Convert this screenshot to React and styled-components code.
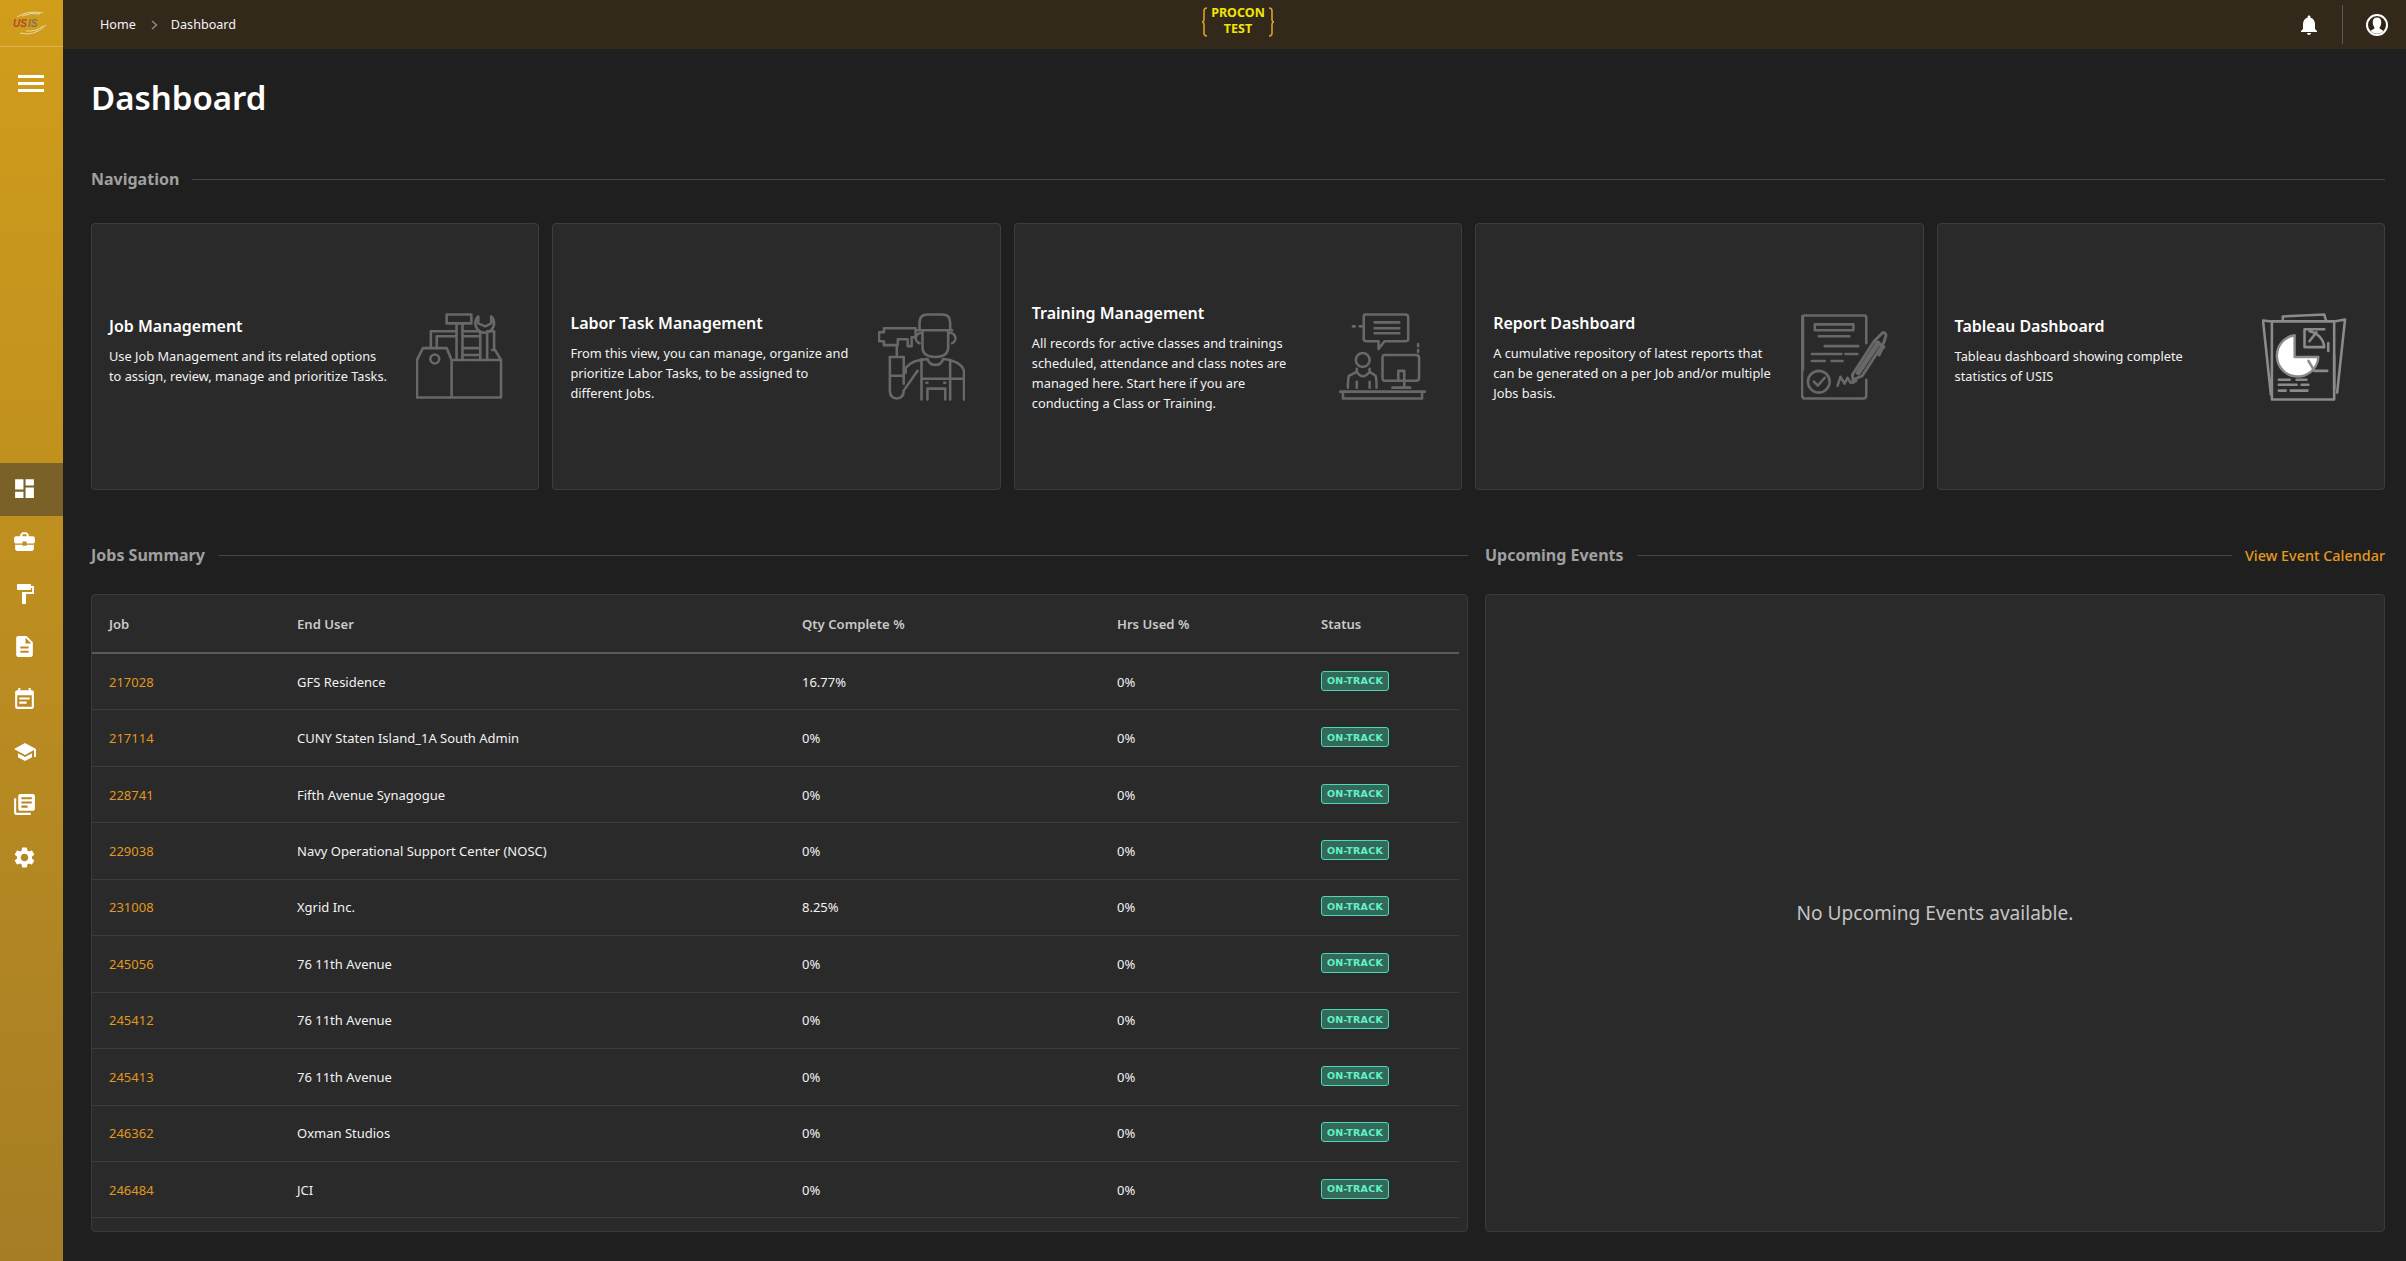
import React from "react";
import styled, { createGlobalStyle } from "styled-components";
import { MdDashboard, MdBusinessCenter, MdFormatPaint, MdDescription, MdEventNote, MdSchool, MdLibraryBooks, MdSettings, MdNotifications } from "react-icons/md";

const Global = createGlobalStyle`
  html, body { margin: 0; padding: 0; height: 100%; background: #1f1f1f; overflow: hidden; }
  body { font-family: "Noto Sans", "Open Sans", sans-serif; color: #fff; }
  * { box-sizing: border-box; }
`;

const Shell = styled.div`
  display: grid;
  grid-template-columns: 63px 1fr;
  height: 1261px;
`;
const Sidebar = styled.aside`
  background: linear-gradient(180deg, #d19d1b 0%, #a67d25 100%);
  display: flex;
  flex-direction: column;
`;
const LogoCell = styled.div`
  height: 47px;
  border-bottom: 1px solid #dcb54f;
  display: flex;
  align-items: center;
  justify-content: center;
  padding-right: 3px;
`;
const Burger = styled.button`
  height: 72px;
  padding: 0 1px 0 0;
  margin: 0 0 344px;
  background: none;
  border: 0;
  display: flex;
  flex-direction: column;
  align-items: center;
  justify-content: center;
  gap: 4px;
  span { display: block; width: 26px; height: 3px; background: #fff; }
`;
const NavItem = styled.div`
  height: 52.7px;
  flex: none;
  display: flex;
  align-items: center;
  justify-content: center;
  padding: 0 14px 2px 0;
  color: #fff;
  background: ${(p) => (p.$active ? "#7a6128" : "transparent")};
  svg { display: block; }
`;
const Column = styled.div`
  display: flex;
  flex-direction: column;
  min-width: 0;
`;
const TopBar = styled.header`
  height: 49px;
  flex: none;
  background: #32291b;
  display: grid;
  grid-template-columns: 1fr auto 1fr;
  align-items: center;
`;
const Crumbs = styled.nav`
  display: flex;
  align-items: center;
  padding-left: 37px;
  font-size: 12.6px;
  color: #f4f4f4;
`;
const CrumbSep = styled.span`
  margin: 0 12px 0 14px;
  width: 9px;
  color: #8d8d8d;
  display: flex;
`;
const Brand = styled.div`
  display: flex;
  align-items: center;
  gap: 3px;
  height: 32px;
  margin: 0 0 5px 7px;
`;
const BrandText = styled.div`
  color: #f2e406;
  font-size: 12.5px;
  line-height: 16.5px;
  font-weight: 700;
  text-align: center;
  white-space: nowrap;
  margin-top: -2px;
`;
const TopRight = styled.div`
  display: flex;
  align-items: center;
  justify-content: flex-end;
  padding-right: 18px;
`;
const Divider = styled.div`
  width: 1px;
  height: 39px;
  background: #5c5c5c;
  margin: 0 23px 0 21px;
`;
const Main = styled.main`
  flex: 1;
  padding: 0 21px 0 28px;
  display: flex;
  flex-direction: column;
`;
const Title = styled.h1`
  margin: 26px 0 0;
  font-size: 33px;
  line-height: 46px;
  font-weight: 600;
  color: #fff;
`;
const SectionHead = styled.div`
  display: flex;
  align-items: center;
  height: 24px;
  margin: ${(p) => p.$top || 0}px 0 0;
  gap: 13px;
`;
const SectionTitle = styled.h2`
  margin: 0;
  font-size: 16px;
  font-weight: 700;
  color: #a0a0a0;
  white-space: nowrap;
`;
const Rule = styled.div`
  flex: 1;
  height: 1px;
  background: #454545;
`;
const CalLink = styled.a`
  color: #e59a1e;
  font-size: 14.4px;
  font-weight: 500;
  white-space: nowrap;
`;
const Cards = styled.section`
  display: grid;
  grid-template-columns: repeat(5, 1fr);
  gap: 13px;
  margin-top: 32px;
  height: 267px;
`;
const Card = styled.article`
  background: #2a2a2a;
  border: 1px solid #3d3d3d;
  border-radius: 4px;
  display: flex;
  align-items: center;
  justify-content: space-between;
  padding: 0 35px 0 17px;
`;
const CardBody = styled.div`
  width: 296px;
  min-height: 85px;
  margin-top: 2px;
`;
const CardTitle = styled.h3`
  margin: 0 0 9px;
  font-size: 16px;
  line-height: 22px;
  font-weight: 600;
  color: #fff;
  white-space: nowrap;
`;
const CardText = styled.p`
  margin: 0;
  font-size: 12.8px;
  line-height: 20px;
  color: #f2f2f2;
  white-space: nowrap;
`;
const Art = styled.svg`
  width: 87px;
  height: 88px;
  flex: none;
  fill: none;
  stroke: ${(p) => p.$tone || "#686868"};
  stroke-width: 2.6;
  stroke-linejoin: round;
  stroke-linecap: round;
`;
const Lower = styled.section`
  display: grid;
  grid-template-columns: 1377px 1fr;
  column-gap: 17px;
  margin-top: 53px;
`;
const Panel = styled.div`
  background: #2a2a2a;
  border: 1px solid #3a3a3a;
  border-radius: 4px;
  height: 638px;
  margin-top: 27px;
`;
const EmptyPanel = styled(Panel)`
  display: flex;
  align-items: center;
  justify-content: center;
  font-size: 19.1px;
  color: #c4c4c4;
`;
const TableWrap = styled.div`
  width: 1367px;
`;
const HeadRow = styled.div`
  display: grid;
  grid-template-columns: 188px 505px 315px 204px 1fr;
  padding-left: 17px;
  height: 59px;
  align-items: center;
  border-bottom: 2px solid #5a5a5a;
  font-size: 13.1px;
  font-weight: 600;
  color: #c9c9c9;
`;
const Row = styled.div`
  display: grid;
  grid-template-columns: 188px 505px 315px 204px 1fr;
  padding-left: 17px;
  height: 56.45px;
  align-items: center;
  border-bottom: 1px solid #3c3c3c;
  font-size: 13px;
  color: #f2f2f2;
`;
const JobLink = styled.a`
  color: #e0981f;
`;
const Badge = styled.span`
  justify-self: start;
  width: 68px;
  height: 20px;
  margin-top: -2px;
  display: flex;
  align-items: center;
  justify-content: center;
  background: #33695a;
  border: 1px solid #4ad9b5;
  border-radius: 3px;
  color: #62f2c8;
  font-family: "DejaVu Sans", sans-serif;
  font-size: 9.5px;
  font-weight: 700;
  letter-spacing: 0.25px;
`;
const LogoMark = styled.svg`
  width: 36px;
  height: 24px;
  overflow: visible;
  text {
    font-family: "Liberation Sans", sans-serif;
    font-size: 10px;
    font-weight: 700;
    font-style: italic;
  }
`;

const JobArt = () => (
  <Art viewBox="0 0 88 88">
    <path d="M1 85V47L7 35H31L36 47V85ZM36 47H86V85H36M86 47L80 37H77M36 47H42" />
    <circle cx="19" cy="46" r="4.5" />
    <path d="M31 1H56V10H31ZM41 10V47M47 10V47M15 35V18H41M21 35V23H41M47 18H64M47 23H64M47 35H64M47 42H64" />
    <path d="M63 3A9.5 9.5 0 1 0 76 3V10L70 13L63 10ZM65 19V47M72 19V47M72 18H79V37" />
  </Art>
);
const PainterArt = () => (
  <Art viewBox="0 0 88 88">
    <path d="M42 17V9Q42 1 50 1H65Q73 1 73 9V17M39 17H75M45 19V34Q45 44 58 44Q71 44 71 34V19" />
    <path d="M45 20A5 5 0 0 0 42 30M71 20A5 5 0 0 1 75 30" />
    <path d="M6 15H38V24H34V33H30V26H20V32H6V28H1V19H6Z" />
    <path d="M19 32V42M12 44H26V71M12 44V78Q12 86 19 86Q26 86 26 78L40 58M12 63H26M28 60V55Q34 47 50 46Q52 52 58 52Q64 52 66 46Q84 48 87 58V87M44 46V87M73 47V87M44 66H73M73 66H87M50 76H68V87M50 76V87M49 70H50M67 70H68" />
  </Art>
);
const TrainingArt = () => (
  <Art viewBox="0 0 88 88">
    <path d="M26 1H67Q70 1 70 4V26Q70 28 67 28H46L40 36V28H28Q25 28 25 26V4Q25 1 26 1Z" />
    <path d="M36 9H61M36 15H61M36 20H61M14 13H16M21 13H23M80 31V33M80 37V39" />
    <path d="M46 42H78Q81 42 81 45V65Q81 68 78 68H46Q44 68 44 65V45Q44 42 46 42ZM60 68V58H66V75M54 75H72" />
    <circle cx="24" cy="47" r="7" />
    <path d="M18 56V59L10 63Q9 66 9 75M31 56V59L37 63Q38 66 38 75M18 59Q24 68 31 59M18 69V75M31 69V75" />
    <path d="M1 79H87M4 79V86H84V79" strokeWidth="2.6" />
  </Art>
);
const ReportArt = () => (
  <Art viewBox="0 0 88 88">
    <path d="M66 30V4Q66 2 64 2H3Q1 2 1 4V82Q1 86 4 86H63Q66 86 66 83V67M2 57V4M1 64V82" />
    <path d="M14 11H53V17H14ZM18 23H49M24 33H58M11 41H41M45 41H57M11 48H24M31 48H42" />
    <circle cx="18" cy="69" r="11" />
    <path d="M13 69L17 73L24 65M37 73L40 64L44 71L47 65L50 70L56 68" />
    <path d="M55 66L53 70L52 62L74 28L82 20Q85 18 86 22L84 29L62 63ZM74 28L84 34M79 42L83 34" strokeWidth="3" />
    <path d="M58 60L78 30" strokeWidth="5" />
  </Art>
);
const TableauArt = () => (
  <Art viewBox="0 0 88 88" $tone="#8b8b8b">
    <path d="M10 8V87H73V8H10ZM10 8L1 7L9 82M73 8L84 6L76 80M21 3L63 1L65 8M21 3V7" />
    <path d="M67 30V38M73 42V76" />
    <path d="M33 22A21 21 0 1 0 57 44H33Z" fill="#fff" strokeWidth="2.4" />
    <path d="M43 16V34H63A18 18 0 0 0 48 18M43 16H63M48 28L55 19M47 48L53 58H66" />
    <path d="M17 67H28M35 67H45M17 72H35M40 72H47M17 78H24M29 78H46" />
  </Art>
);

const cards = [
  { t: "Job Management", a: <JobArt />, d: ["Use Job Management and its related options", "to assign, review, manage and prioritize Tasks."] },
  { t: "Labor Task Management", a: <PainterArt />, d: ["From this view, you can manage, organize and", "prioritize Labor Tasks, to be assigned to", "different Jobs."] },
  { t: "Training Management", a: <TrainingArt />, d: ["All records for active classes and trainings", "scheduled, attendance and class notes are", "managed here. Start here if you are", "conducting a Class or Training."] },
  { t: "Report Dashboard", a: <ReportArt />, d: ["A cumulative repository of latest reports that", "can be generated on a per Job and/or multiple", "Jobs basis."] },
  { t: "Tableau Dashboard", a: <TableauArt />, d: ["Tableau dashboard showing complete", "statistics of USIS"] },
];

const jobs = [
  ["217028", "GFS Residence", "16.77%"],
  ["217114", "CUNY Staten Island_1A South Admin", "0%"],
  ["228741", "Fifth Avenue Synagogue", "0%"],
  ["229038", "Navy Operational Support Center (NOSC)", "0%"],
  ["231008", "Xgrid Inc.", "8.25%"],
  ["245056", "76 11th Avenue", "0%"],
  ["245412", "76 11th Avenue", "0%"],
  ["245413", "76 11th Avenue", "0%"],
  ["246362", "Oxman Studios", "0%"],
  ["246484", "JCI", "0%"],
];

export default function App() {
  return (
    <>
      <Global />
      <Shell>
        <Sidebar>
          <LogoCell>
            <LogoMark viewBox="0 0 36 24">
              <path d="M5 6Q16 -1 31 2M10 5Q20 1 28 3M8 22Q22 26 34 14M14 20Q24 21 31 15" fill="none" stroke="#e8d9a8" strokeWidth="1" />
              <text x="1" y="16" fill="#b04a2a">US</text>
              <text x="16" y="16" fill="#8a6f50">IS</text>
            </LogoMark>
          </LogoCell>
          <Burger aria-label="Menu"><span /><span /><span /></Burger>
          <NavItem $active><MdDashboard size={25} /></NavItem>
          <NavItem><MdBusinessCenter size={25} /></NavItem>
          <NavItem><MdFormatPaint size={24} /></NavItem>
          <NavItem><MdDescription size={25} /></NavItem>
          <NavItem><MdEventNote size={25} /></NavItem>
          <NavItem><MdSchool size={24} /></NavItem>
          <NavItem><MdLibraryBooks size={25} /></NavItem>
          <NavItem><MdSettings size={25} /></NavItem>
        </Sidebar>
        <Column>
          <TopBar>
            <Crumbs>
              <span>Home</span>
              <CrumbSep>
                <svg width="9" height="10" viewBox="0 0 9 10" fill="none" stroke="currentColor" strokeWidth="1.4"><path d="M2 1L6.5 5L2 9" /></svg>
              </CrumbSep>
              <span>Dashboard</span>
            </Crumbs>
            <Brand>
              <svg width="7" height="30" viewBox="0 0 7 30" fill="none" stroke="#d8a02a" strokeWidth="1.6"><path d="M6 1Q3 1 3 4V12Q3 15 1 15Q3 15 3 18V26Q3 29 6 29" /></svg>
              <BrandText>PROCON<br />TEST</BrandText>
              <svg width="7" height="30" viewBox="0 0 7 30" fill="none" stroke="#d8a02a" strokeWidth="1.6"><path d="M1 1Q4 1 4 4V12Q4 15 6 15Q4 15 4 18V26Q4 29 1 29" /></svg>
            </Brand>
            <TopRight>
              <MdNotifications size={24} color="#fff" />
              <Divider />
              <svg width="22" height="22" viewBox="0 0 22 22">
                <circle cx="11" cy="11" r="10" fill="#2f2618" stroke="#fff" strokeWidth="2" />
                <path d="M11 3.5C7.8 3.5 6.5 6 6.8 9C7 11.5 8 13 8.6 13.8C8.6 15 6.5 15.8 4.5 17A9 9 0 0 0 17.5 17C15.5 15.8 13.4 15 13.4 13.8C14 13 15 11.5 15.2 9C15.5 6 14.2 3.5 11 3.5Z" fill="#fff" />
              </svg>
            </TopRight>
          </TopBar>
          <Main>
            <Title>Dashboard</Title>
            <SectionHead $top={46}>
              <SectionTitle>Navigation</SectionTitle>
              <Rule />
            </SectionHead>
            <Cards>
              {cards.map((c) => (
                <Card key={c.t}>
                  <CardBody>
                    <CardTitle>{c.t}</CardTitle>
                    <CardText>
                      {c.d.map((l) => (
                        <React.Fragment key={l}>{l}<br /></React.Fragment>
                      ))}
                    </CardText>
                  </CardBody>
                  {c.a}
                </Card>
              ))}
            </Cards>
            <Lower>
              <div>
                <SectionHead>
                  <SectionTitle>Jobs Summary</SectionTitle>
                  <Rule />
                </SectionHead>
                <Panel>
                  <TableWrap>
                    <HeadRow>
                      <span>Job</span>
                      <span>End User</span>
                      <span>Qty Complete %</span>
                      <span>Hrs Used %</span>
                      <span>Status</span>
                    </HeadRow>
                    {jobs.map((j) => (
                      <Row key={j[0]}>
                        <JobLink>{j[0]}</JobLink>
                        <span>{j[1]}</span>
                        <span>{j[2]}</span>
                        <span>0%</span>
                        <Badge>ON-TRACK</Badge>
                      </Row>
                    ))}
                  </TableWrap>
                </Panel>
              </div>
              <div>
                <SectionHead>
                  <SectionTitle>Upcoming Events</SectionTitle>
                  <Rule />
                  <CalLink>View Event Calendar</CalLink>
                </SectionHead>
                <EmptyPanel>No Upcoming Events available.</EmptyPanel>
              </div>
            </Lower>
          </Main>
        </Column>
      </Shell>
    </>
  );
}
